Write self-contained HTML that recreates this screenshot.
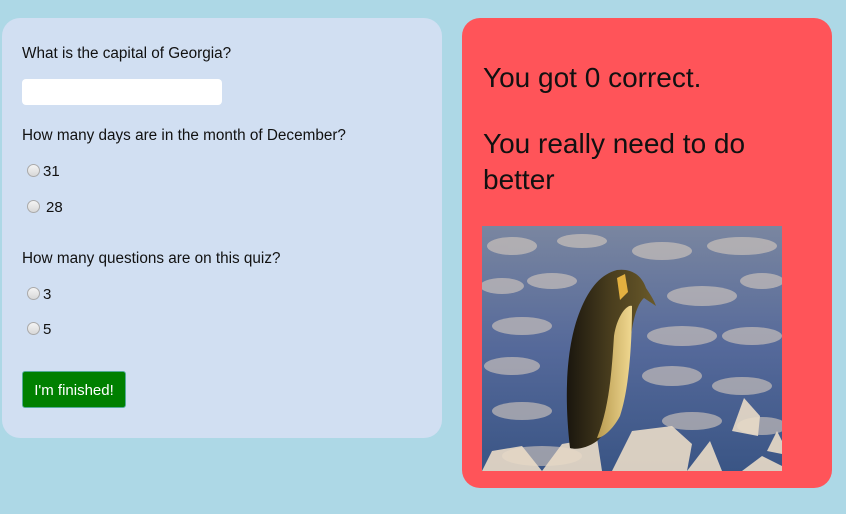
<!DOCTYPE html>
<html><head><meta charset="utf-8"><style>
html,body{margin:0;padding:0;}
body{width:846px;height:514px;background:#add8e6;position:relative;overflow:hidden;font-family:"Liberation Sans",sans-serif;color:#111;}
.l{position:absolute;left:2px;top:18px;width:440px;height:420px;background:#d1dff2;border-radius:18px;}
.r{position:absolute;left:462px;top:18px;width:370px;height:470px;background:#ff5459;border-radius:18px;}
.t{position:absolute;font-size:15.3px;white-space:nowrap;}
.inp{position:absolute;left:22px;top:79px;width:200px;height:26px;background:#fff;border-radius:4px;}
.rad{position:absolute;width:11px;height:11px;border-radius:50%;border:1px solid #aaa;background:linear-gradient(#f4f4f4,#d8d8d8);}
.o{position:absolute;font-size:15px;}
.btn{position:absolute;left:22px;top:371px;width:104px;height:37px;background:#008000;border:1px solid #5a9;border-radius:3px;color:#fff;font-size:15px;line-height:37px;text-align:center;box-sizing:border-box;}
.h{position:absolute;left:483px;font-size:28px;color:#111;line-height:36px;}
</style></head><body>
<div class="l"></div>
<div class="t" style="left:22px;top:45px">What is the capital of Georgia?</div>
<div class="inp"></div>
<div class="t" style="left:22px;top:127px">How many days are in the month of December?</div>
<div class="rad" style="left:27px;top:164px"></div><div class="o" style="left:43px;top:163px">31</div>
<div class="rad" style="left:27px;top:200px"></div><div class="o" style="left:46px;top:199px">28</div>
<div class="t" style="left:22px;top:250px">How many questions are on this quiz?</div>
<div class="rad" style="left:27px;top:287px"></div><div class="o" style="left:43px;top:286px">3</div>
<div class="rad" style="left:27px;top:322px"></div><div class="o" style="left:43px;top:321px">5</div>
<div class="btn">I'm finished!</div>
<div class="r"></div>
<div class="h" style="top:60px">You got 0 correct.</div>
<div class="h" style="top:126px;width:320px">You really need to do better</div>
<svg style="position:absolute;left:482px;top:226px" width="300" height="245" viewBox="0 0 300 245">
<defs>
<linearGradient id="bg" x1="0" y1="0" x2="0" y2="1"><stop offset="0" stop-color="#7a86a0"/><stop offset=".5" stop-color="#55699a"/><stop offset="1" stop-color="#3a5585"/></linearGradient>
<linearGradient id="pg" x1="0" y1="0" x2="1" y2="0"><stop offset="0" stop-color="#1a160e"/><stop offset=".5" stop-color="#4a3e1e"/><stop offset="1" stop-color="#6a5a2a"/></linearGradient>
<linearGradient id="bel" x1="0" y1="0" x2="1" y2="0"><stop offset="0" stop-color="#b89a50"/><stop offset="1" stop-color="#f0d890"/></linearGradient>
</defs>
<rect width="300" height="245" fill="url(#bg)"/>
<g fill="#d8ccc0" opacity=".6">
<ellipse cx="30" cy="20" rx="25" ry="9"/><ellipse cx="100" cy="15" rx="25" ry="7"/><ellipse cx="180" cy="25" rx="30" ry="9"/><ellipse cx="260" cy="20" rx="35" ry="9"/>
<ellipse cx="20" cy="60" rx="22" ry="8"/><ellipse cx="70" cy="55" rx="25" ry="8"/><ellipse cx="220" cy="70" rx="35" ry="10"/><ellipse cx="280" cy="55" rx="22" ry="8"/>
<ellipse cx="40" cy="100" rx="30" ry="9"/><ellipse cx="200" cy="110" rx="35" ry="10"/><ellipse cx="270" cy="110" rx="30" ry="9"/><ellipse cx="30" cy="140" rx="28" ry="9"/>
<ellipse cx="190" cy="150" rx="30" ry="10"/><ellipse cx="260" cy="160" rx="30" ry="9"/><ellipse cx="40" cy="185" rx="30" ry="9"/><ellipse cx="210" cy="195" rx="30" ry="9"/>
<ellipse cx="60" cy="230" rx="40" ry="10"/><ellipse cx="280" cy="200" rx="25" ry="9"/></g>
<g fill="#eadcc8" opacity=".9">
<path d="M0 245 L10 225 L40 220 L60 245Z"/><path d="M60 245 L80 218 L115 212 L120 245Z"/><path d="M130 245 L150 205 L190 200 L210 218 L205 245Z"/><path d="M205 245 L228 215 L240 245Z"/><path d="M250 205 L262 172 L278 190 L276 210Z"/><path d="M260 245 L280 230 L300 240 L300 245Z"/><path d="M285 225 L295 205 L300 215 L300 228Z"/></g>
<path d="M88 222 C82 170 84 120 98 85 C108 60 120 48 135 44 C150 42 160 50 164 62 C168 68 172 74 174 80 L162 72 C155 78 150 95 148 120 C146 160 138 195 115 215 C105 222 95 224 88 222Z" fill="url(#pg)"/>
<path d="M132 110 C135 90 145 78 150 80 C150 110 148 160 138 190 C130 205 120 212 115 212 C128 180 130 140 132 110Z" fill="url(#bel)"/>
<path d="M135 52 L143 48 L146 66 L138 74Z" fill="#e3b040"/>
</svg>
</body></html>
